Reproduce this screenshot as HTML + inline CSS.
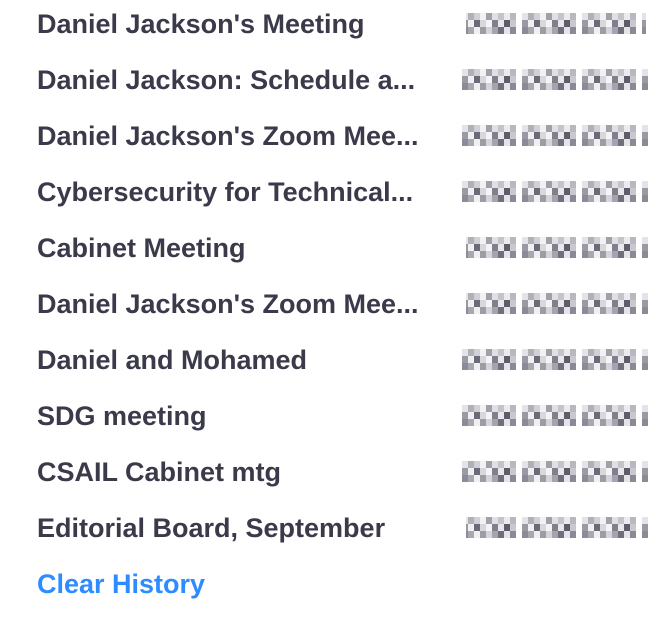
<!DOCTYPE html>
<html><head><style>
body{margin:0;width:672px;height:620px;background:#fff;overflow:hidden;font-family:"Liberation Sans",sans-serif;position:relative}
.r{position:absolute;left:37px;font-weight:bold;font-size:27px;color:#3a3a4a;line-height:30px;white-space:nowrap}
svg{position:absolute;left:0;top:0}
</style></head><body>
<div class="r" style="top:9px">Daniel Jackson's Meeting</div>
<div class="r" style="top:65px">Daniel Jackson: Schedule a...</div>
<div class="r" style="top:121px">Daniel Jackson's Zoom Mee...</div>
<div class="r" style="top:177px">Cybersecurity for Technical...</div>
<div class="r" style="top:233px">Cabinet Meeting</div>
<div class="r" style="top:289px">Daniel Jackson's Zoom Mee...</div>
<div class="r" style="top:345px">Daniel and Mohamed</div>
<div class="r" style="top:401px">SDG meeting</div>
<div class="r" style="top:457px">CSAIL Cabinet mtg</div>
<div class="r" style="top:513px">Editorial Board, September</div>
<div class="r" style="top:569px;color:#2d8cff">Clear History</div>
<svg width="672" height="620">
<defs>
<pattern id="p" x="462" y="13" width="60" height="56" patternUnits="userSpaceOnUse">
<rect x="0" y="0" width="6" height="7" fill="#e4e4e8"/><rect x="6" y="0" width="6" height="7" fill="#b0b0b8"/><rect x="12" y="0" width="6" height="7" fill="#d0d0d6"/><rect x="18" y="0" width="6" height="7" fill="#f2f2f4"/><rect x="24" y="0" width="6" height="7" fill="#a0a0aa"/><rect x="30" y="0" width="6" height="7" fill="#e0e0e4"/><rect x="36" y="0" width="6" height="7" fill="#c4c4ca"/><rect x="42" y="0" width="6" height="7" fill="#ebebee"/><rect x="48" y="0" width="6" height="7" fill="#b8b8c0"/>
<rect x="0" y="7" width="6" height="7" fill="#9a9aa4"/><rect x="6" y="7" width="6" height="7" fill="#f0f0f2"/><rect x="12" y="7" width="6" height="7" fill="#6a6a78"/><rect x="18" y="7" width="6" height="7" fill="#d8d8dc"/><rect x="24" y="7" width="6" height="7" fill="#f4f4f6"/><rect x="30" y="7" width="6" height="7" fill="#80808c"/><rect x="36" y="7" width="6" height="7" fill="#e8e8ec"/><rect x="42" y="7" width="6" height="7" fill="#5c5c6a"/><rect x="48" y="7" width="6" height="7" fill="#c8c8ce"/>
<rect x="0" y="14" width="6" height="7" fill="#8c8c98"/><rect x="6" y="14" width="6" height="7" fill="#a8a8b0"/><rect x="12" y="14" width="6" height="7" fill="#f0f0f2"/><rect x="18" y="14" width="6" height="7" fill="#9c9ca6"/><rect x="24" y="14" width="6" height="7" fill="#d4d4da"/><rect x="30" y="14" width="6" height="7" fill="#a4a4ae"/><rect x="36" y="14" width="6" height="7" fill="#70707c"/><rect x="42" y="14" width="6" height="7" fill="#e4e4e8"/><rect x="48" y="14" width="6" height="7" fill="#8a8a96"/>
</pattern>
</defs>
<g fill="url(#p)">
<rect x="466" y="13" width="180" height="21"/><rect x="462" y="69" width="186" height="21"/><rect x="462" y="125" width="186" height="21"/><rect x="462" y="181" width="186" height="21"/><rect x="466" y="237" width="182" height="21"/><rect x="466" y="293" width="182" height="21"/><rect x="462" y="349" width="186" height="21"/><rect x="462" y="405" width="186" height="21"/><rect x="462" y="461" width="186" height="21"/><rect x="466" y="517" width="182" height="21"/>
</g>
</svg>
</body></html>
